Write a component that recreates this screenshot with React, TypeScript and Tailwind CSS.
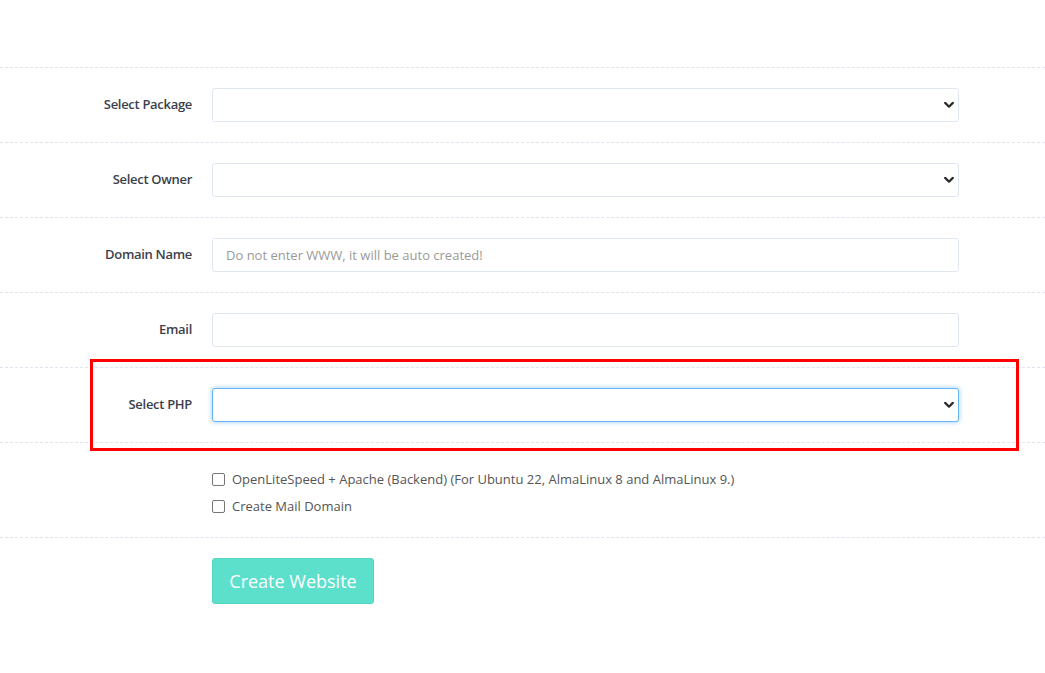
import React from "react";

const Chevron = () => (
  <svg width="10" height="7" viewBox="0 0 10 7" className="pointer-events-none absolute right-[4px] top-1/2 -translate-y-1/2 mr-[1px]">
    <path d="M1.2 1.4 L5 5.2 L8.8 1.4" fill="none" stroke="#2b2b2b" strokeWidth="2.2" strokeLinecap="round" strokeLinejoin="round" />
  </svg>
);

function Row({ label, children, extra }: { label: string; children: React.ReactNode; extra?: React.ReactNode }) {
  return (
    <div className="relative flex h-[75px] items-center border-t border-dashed border-[#dde4ee]">
      <div className="w-[192px] text-right text-[13px] font-semibold tracking-[-0.3px] text-[#3b3f4c]">{label}</div>
      <div className="ml-[20px] w-[747px]">{children}</div>
      {extra}
    </div>
  );
}

function Select({ focused }: { focused?: boolean }) {
  return (
    <div className="relative">
      <select
        className={
          "block h-[34px] w-full appearance-none rounded-[3px] border bg-white px-3 text-[13px] outline-none " +
          (focused
            ? "border-[#66b5f5] shadow-[0_0_4px_1px_rgba(102,175,233,0.45)]"
            : "border-[#dfe6ef]")
        }
        defaultValue=""
      >
        <option value=""></option>
      </select>
      <Chevron />
    </div>
  );
}

export default function App() {
  return (
    <div className="min-h-[673px] bg-white pt-[67px]" style={{ fontFamily: '"Open Sans", "Liberation Sans", sans-serif' }}>
      <Row label="Select Package">
        <Select />
      </Row>
      <Row label="Select Owner">
        <Select />
      </Row>
      <Row label="Domain Name">
        <input
          className="block h-[34px] w-full rounded-[3px] border border-[#dfe6ef] bg-white px-[13px] text-[13px] text-[#555] outline-none placeholder:text-[#9a9a9a]"
          placeholder="Do not enter WWW, it will be auto created!"
        />
      </Row>
      <Row label="Email">
        <input className="block h-[34px] w-full rounded-[3px] border border-[#dfe6ef] bg-white px-[13px] text-[13px] outline-none" />
      </Row>
      <Row
        label="Select PHP"
        extra={<div className="pointer-events-none absolute left-[90px] top-[-9px] h-[92px] w-[929px] border-[3px] border-[#ff0000]" />}
      >
        <Select focused />
      </Row>
      <div className="flex h-[95px] flex-col gap-[14px] border-t border-dashed border-[#dde4ee] pl-[212px] pt-[30px]">
        <label className="flex items-center gap-[7px] text-[13px] leading-[13px] text-[#555]">
          <span className="h-[13px] w-[13px] rounded-[2px] border border-[#767676] bg-white" />
          OpenLiteSpeed + Apache (Backend) (For Ubuntu 22, AlmaLinux 8 and AlmaLinux 9.)
        </label>
        <label className="flex items-center gap-[7px] text-[13px] leading-[13px] text-[#555]">
          <span className="h-[13px] w-[13px] rounded-[2px] border border-[#767676] bg-white" />
          Create Mail Domain
        </label>
      </div>
      <div className="border-t border-dashed border-[#dde4ee] pl-[212px] pt-[20px]">
        <button className="h-[46px] w-[162px] rounded-[3px] border border-[#55d6c2] bg-[#5cdfcb] text-[18px] font-medium text-white">
          Create Website
        </button>
      </div>
    </div>
  );
}
